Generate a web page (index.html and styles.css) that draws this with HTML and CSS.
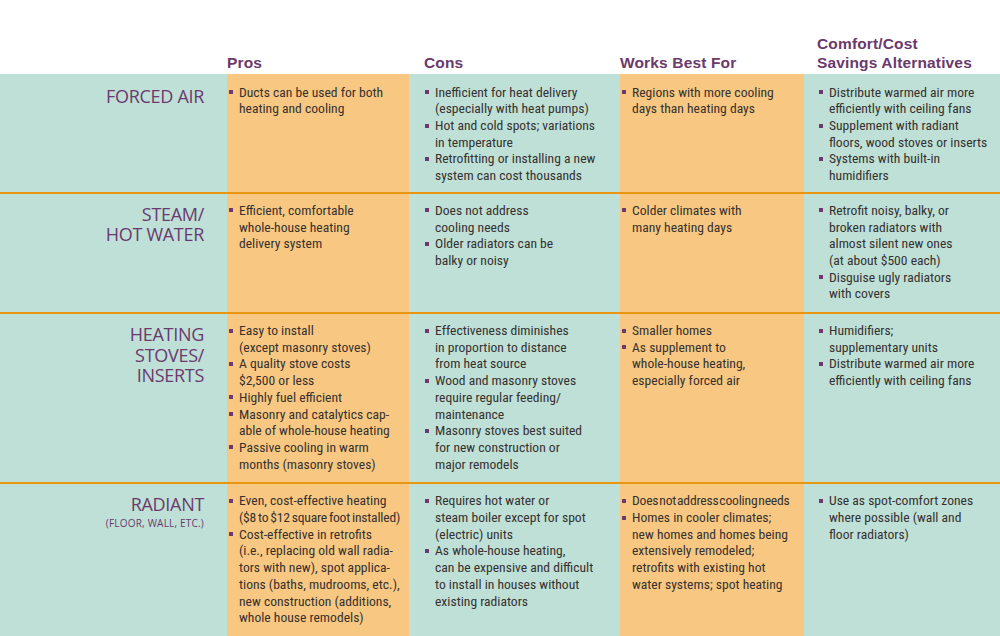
FILE: index.html
```html
<!DOCTYPE html>
<html lang="en">
<head>
<meta charset="utf-8">
<title>Heating Systems Comparison</title>
<link rel="stylesheet" href="styles.css">
</head>
<body>
<div class="chart">
  <div class="row head">
    <div class="cell label"></div>
    <div class="cell pros"><h2>Pros</h2></div>
    <div class="cell cons"><h2>Cons</h2></div>
    <div class="cell works"><h2>Works Best For</h2></div>
    <div class="cell alt"><h2><span class="hl">Comfort/Cost</span><span class="hl">Savings Alternatives</span></h2></div>
  </div>

  <div class="row r1">
    <div class="cell label"><h3><span class="ln">FORCED AIR</span></h3></div>
    <div class="cell pros"><ul>
      <li><span>Ducts can be used for both<br>heating and cooling</span></li>
    </ul></div>
    <div class="cell cons"><ul>
      <li><span>Inefficient for heat delivery<br>(especially with heat pumps)</span></li>
      <li><span>Hot and cold spots; variations<br>in temperature</span></li>
      <li><span>Retrofitting or installing a new<br>system can cost thousands</span></li>
    </ul></div>
    <div class="cell works"><ul>
      <li><span>Regions with more cooling<br>days than heating days</span></li>
    </ul></div>
    <div class="cell alt"><ul>
      <li><span>Distribute warmed air more<br>efficiently with ceiling fans</span></li>
      <li><span>Supplement with radiant<br>floors, wood stoves or inserts</span></li>
      <li><span>Systems with built-in<br>humidifiers</span></li>
    </ul></div>
  </div>

  <div class="row">
    <div class="cell label"><h3><span class="ln">STEAM/</span><span class="ln">HOT WATER</span></h3></div>
    <div class="cell pros"><ul>
      <li><span>Efficient, comfortable<br>whole-house heating<br>delivery system</span></li>
    </ul></div>
    <div class="cell cons"><ul>
      <li><span>Does not address<br>cooling needs</span></li>
      <li><span>Older radiators can be<br>balky or noisy</span></li>
    </ul></div>
    <div class="cell works"><ul>
      <li><span>Colder climates with<br>many heating days</span></li>
    </ul></div>
    <div class="cell alt"><ul>
      <li><span>Retrofit noisy, balky, or<br>broken radiators with<br>almost silent new ones<br>(at about $500 each)</span></li>
      <li><span>Disguise ugly radiators<br>with covers</span></li>
    </ul></div>
  </div>

  <div class="row">
    <div class="cell label"><h3><span class="ln">HEATING</span><span class="ln">STOVES/</span><span class="ln">INSERTS</span></h3></div>
    <div class="cell pros"><ul>
      <li><span>Easy to install<br>(except masonry stoves)</span></li>
      <li><span>A quality stove costs<br>$2,500 or less</span></li>
      <li><span>Highly fuel efficient</span></li>
      <li><span>Masonry and catalytics cap-<br>able of whole-house heating</span></li>
      <li><span>Passive cooling in warm<br>months (masonry stoves)</span></li>
    </ul></div>
    <div class="cell cons"><ul>
      <li><span>Effectiveness diminishes<br>in proportion to distance<br>from heat source</span></li>
      <li><span>Wood and masonry stoves<br>require regular feeding/<br>maintenance</span></li>
      <li><span>Masonry stoves best suited<br>for new construction or<br>major remodels</span></li>
    </ul></div>
    <div class="cell works"><ul>
      <li><span>Smaller homes</span></li>
      <li><span>As supplement to<br>whole-house heating,<br>especially forced air</span></li>
    </ul></div>
    <div class="cell alt"><ul>
      <li><span>Humidifiers;<br>supplementary units</span></li>
      <li><span>Distribute warmed air more<br>efficiently with ceiling fans</span></li>
    </ul></div>
  </div>

  <div class="row last">
    <div class="cell label"><h3><span class="ln">RADIANT</span></h3><p class="sub">(FLOOR, WALL, ETC.)</p></div>
    <div class="cell pros"><ul>
      <li><span>Even, cost-effective heating<br><span class="tight">($8 to $12 square foot installed)</span></span></li>
      <li><span>Cost-effective in retrofits<br>(i.e., replacing old wall radia-<br>tors with new), spot applica-<br>tions (baths, mudrooms, etc.),<br>new construction (additions,<br>whole house remodels)</span></li>
    </ul></div>
    <div class="cell cons"><ul>
      <li><span>Requires hot water or<br>steam boiler except for spot<br>(electric) units</span></li>
      <li><span>As whole-house heating,<br>can be expensive and difficult<br>to install in houses without<br>existing radiators</span></li>
    </ul></div>
    <div class="cell works"><ul>
      <li><span><span class="tighter">Does not address cooling needs</span></span></li>
      <li><span>Homes in cooler climates;<br>new homes and homes being<br>extensively remodeled;<br>retrofits with existing hot<br>water systems; spot heating</span></li>
    </ul></div>
    <div class="cell alt"><ul>
      <li><span>Use as spot-comfort zones<br>where possible (wall and<br>floor radiators)</span></li>
    </ul></div>
  </div>
</div>
</body>
</html>
```

FILE: styles.css
```css
html, body {
  margin: 0;
  padding: 0;
  background: #ffffff;
}
body {
  width: 1000px;
  height: 636px;
  overflow: hidden;
}
.chart {
  display: flex;
  flex-direction: column;
  height: 636px;
}
.row {
  display: grid;
  grid-template-columns: 227px 182px 211px 184px 196px;
  border-top: 2px solid #e8950f;
}
.row.head {
  border-top: 0;
  height: 74px;
}
.row.r1 {
  border-top: 0;
}
.row.last {
  flex: 1;
}
.cell {
  background: #bfe0d7;
  padding: 8px 0 10px;
}
.cell.pros, .cell.works {
  background: #f8c882;
}
.row.r1 .cell {
  padding-top: 10px;
  padding-bottom: 8px;
}
.head .cell {
  background: #ffffff;
  display: flex;
  align-items: flex-end;
  padding: 0 0 2px;
}
.head .pros { padding-left: 0; }
.head .cons { padding-left: 15px; }
.head .works { padding-left: 0; }
.head .alt { padding-left: 13px; }
h2 {
  margin: 0;
  font-family: "Liberation Sans", Arial, sans-serif;
  font-weight: bold;
  font-size: 15.5px;
  line-height: 19px;
  letter-spacing: 0.15px;
  color: #6b396b;
}
.hl {
  display: block;
  height: 19px;
  overflow: visible;
}
.label {
  text-align: right;
  padding-right: 23px;
}
h3 {
  margin: 2px 0 0;
  font-family: "Open Sans", sans-serif;
  font-weight: normal;
  font-size: 18px;
  line-height: 20.5px;
  letter-spacing: -0.3px;
  color: #6a3a6e;
}
.ln {
  display: block;
  height: 20.5px;
  line-height: 20.5px;
}
.sub {
  margin: 0;
  font-family: "Open Sans", sans-serif;
  font-size: 10px;
  line-height: 16px;
  letter-spacing: 0.2px;
  color: #6a3a6e;
}
ul {
  list-style: none;
  margin: 0;
  padding: 0;
}
li {
  display: flex;
  align-items: flex-start;
  font-family: "Roboto Condensed", "Roboto", sans-serif;
  font-stretch: condensed;
  font-size: 13.6px;
  line-height: 16.7px;
  color: #36312f;
  white-space: nowrap;
}
li::before {
  content: "";
  flex: none;
  width: 4px;
  height: 4px;
  margin: 6.5px 6px 0 0;
  background: #6b396b;
}
.pros ul { padding-left: 2px; }
.cons ul { padding-left: 16px; }
.works ul { padding-left: 2px; }
.alt ul { padding-left: 15px; }
.tight {
  letter-spacing: -0.2px;
  word-spacing: -1px;
}
.tighter {
  letter-spacing: -0.2px;
  word-spacing: -2px;
}
```
